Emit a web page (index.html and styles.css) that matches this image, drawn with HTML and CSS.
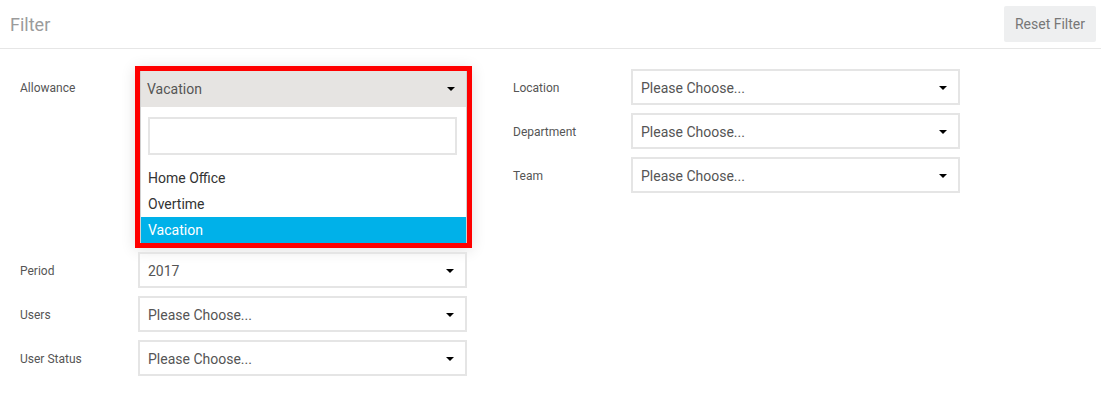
FILE: index.html
```html
<!DOCTYPE html>
<html lang="en">
<head>
    <meta charset="UTF-8">
    <meta name="viewport" content="width=device-width, initial-scale=1.0">
    <title>Filter</title>
    <link rel="stylesheet" href="styles.css">
</head>
<body>
    <div class="filter-header">
        <h1>Filter</h1>
        <button class="reset-btn">Reset Filter</button>
    </div>

    <div class="filter-form">
        <div class="filter-col">
            <div class="filter-row">
                <label>Allowance</label>
                <div class="select-open">
                    <div class="select-current">
                        <span>Vacation</span>
                        <span class="caret"></span>
                    </div>
                    <div class="select-drop">
                        <div class="drop-search"><input type="text"></div>
                        <ul class="drop-options">
                            <li>Home Office</li>
                            <li>Overtime</li>
                            <li class="active">Vacation</li>
                        </ul>
                    </div>
                </div>
            </div>
            <div class="filter-row">
                <label>Period</label>
                <div class="select-box"><span>2017</span><span class="caret"></span></div>
            </div>
            <div class="filter-row">
                <label>Users</label>
                <div class="select-box"><span>Please Choose...</span><span class="caret"></span></div>
            </div>
            <div class="filter-row">
                <label>User Status</label>
                <div class="select-box"><span>Please Choose...</span><span class="caret"></span></div>
            </div>
        </div>

        <div class="filter-col">
            <div class="filter-row">
                <label>Location</label>
                <div class="select-box"><span>Please Choose...</span><span class="caret"></span></div>
            </div>
            <div class="filter-row">
                <label>Department</label>
                <div class="select-box"><span>Please Choose...</span><span class="caret"></span></div>
            </div>
            <div class="filter-row">
                <label>Team</label>
                <div class="select-box"><span>Please Choose...</span><span class="caret"></span></div>
            </div>
        </div>
    </div>
</body>
</html>
```

FILE: styles.css
```css
body {
    margin: 0;
    font-family: Roboto, "Liberation Sans", Arial, sans-serif;
    background: #fff;
    color: #555;
}
.filter-header {
    display: flex;
    justify-content: space-between;
    align-items: center;
    height: 48px;
    padding: 0 5px 0 10px;
    border-bottom: 1px solid #e6e6e6;
}
.filter-header h1 {
    margin: 0;
    font-size: 18px;
    font-weight: normal;
    color: #9b9b9b;
}
.reset-btn {
    height: 36px;
    padding: 0 11px;
    border: none;
    border-radius: 2px;
    background: #eeeff0;
    color: #777;
    font-family: inherit;
    font-size: 14px;
    cursor: pointer;
}
.filter-form {
    display: flex;
    gap: 46px;
    padding: 20px 20px;
}
.filter-col {
    display: flex;
    flex-direction: column;
    gap: 8px;
}
.filter-row {
    display: flex;
    align-items: flex-start;
}
.filter-row label {
    width: 118px;
    height: 36px;
    line-height: 38px;
    font-size: 12px;
    color: #555;
}
.select-box {
    box-sizing: border-box;
    display: flex;
    align-items: center;
    justify-content: space-between;
    width: 329px;
    height: 36px;
    padding: 1px 11px 0 8px;
    border: 2px solid #e5e5e5;
    font-size: 14px;
    color: #555;
}
.caret {
    width: 0;
    height: 0;
    border-left: 4px solid transparent;
    border-right: 4px solid transparent;
    border-top: 4px solid #000;
}
.select-open {
    box-sizing: border-box;
    width: 337px;
    margin: -3px -5px -4px -3px;
    border: 5px solid #ff0000;
    background: #fff;
    box-shadow: 0 2px 14px rgba(0, 0, 0, 0.12);
}
.select-current {
    display: flex;
    align-items: center;
    justify-content: space-between;
    height: 36px;
    padding: 0 11px 0 6px;
    background: #e6e4e2;
    border-left: 1px solid #d0d0d0;
    border-right: 1px solid #d0d0d0;
    font-size: 14px;
    color: #555;
}
.select-drop {
    border-left: 1px solid #d0d0d0;
    border-right: 1px solid #d0d0d0;
}
.drop-search {
    padding: 10px 9px 10px 7px;
}
.drop-search input {
    box-sizing: border-box;
    display: block;
    width: 100%;
    height: 38px;
    border: 2px solid #e5e5e5;
    outline: none;
}
.drop-options {
    list-style: none;
    margin: 0;
    padding: 0;
}
.drop-options li {
    height: 26px;
    line-height: 26px;
    padding-left: 7px;
    font-size: 14px;
    color: #333;
}
.drop-options li.active {
    background: #00b1e9;
    color: #fff;
}
```
